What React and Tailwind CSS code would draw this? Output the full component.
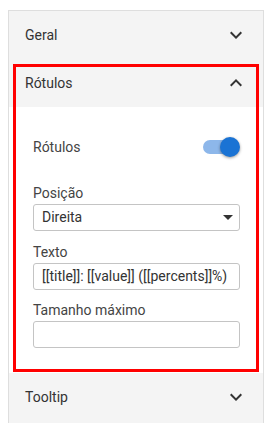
import React from "react";

const ExpandMore = () => (
  <svg width="24" height="24" viewBox="0 0 24 24" fill="#333">
    <path d="M16.59 8.59L12 13.17 7.41 8.59 6 10l6 6 6-6z" />
  </svg>
);

const ExpandLess = () => (
  <svg width="24" height="24" viewBox="0 0 24 24" fill="#333">
    <path d="M12 8l-6 6 1.41 1.41L12 10.83l4.59 4.58L18 14z" />
  </svg>
);

const SectionHeader = ({ title, open }) => (
  <div className="h-12 flex items-center justify-between pl-4 pr-[15px] bg-[#f4f4f4] text-[14px] text-[#333]">
    <span>{title}</span>
    {open ? <ExpandLess /> : <ExpandMore />}
  </div>
);

const Field = ({ label, children, className = "" }) => (
  <div className={className}>
    <div className="h-5 leading-5 text-[14px] text-[#444]">{label}</div>
    {children}
  </div>
);

const App = () => {
  return (
    <div
      className="relative w-[267px] h-[423px] overflow-hidden bg-white pt-[10px] pl-[8px]"
      style={{ fontFamily: "Roboto, 'Noto Sans', sans-serif" }}
    >
      <div className="w-[256px] h-[420px] border border-[#dedede] bg-[#f4f4f4]">
        <SectionHeader title="Geral" />

        {/* Rótulos section */}
        <div>
          <SectionHeader title="Rótulos" open />
          <div className="bg-white pl-[24px] pr-[23px] pt-[30px] pb-[25px]">
            <div className="h-5 flex items-center justify-between">
              <span className="text-[14px] text-[#444]">Rótulos</span>
              <div className="relative w-[37px] h-5">
                <div className="absolute left-0 top-[3px] w-[34px] h-[14px] rounded-full bg-[#8db7ea]" />
                <div className="absolute right-0 top-0 w-5 h-5 rounded-full bg-[#1a73d4] shadow-[0_1px_3px_rgba(0,0,0,0.4)]" />
              </div>
            </div>

            <Field label="Posição" className="mt-[26px]">
              <div className="mt-px h-[27px] flex items-center justify-between border border-[#c4c4c4] rounded-[3px] pl-2 text-[14px] text-[#333]">
                <span>Direita</span>
                <svg width="10" height="5" viewBox="0 0 10 5" className="mr-[6px]">
                  <path d="M0 0l5 5 5-5z" fill="#333" />
                </svg>
              </div>
            </Field>

            <Field label="Texto" className="mt-[11px]">
              <div className="mt-px h-[27px] flex items-center border border-[#c4c4c4] rounded-[3px] pl-2 text-[14px] text-[#333] whitespace-nowrap overflow-hidden">
                [[title]]: [[value]] ([[percents]]%)
              </div>
            </Field>

            <Field label="Tamanho máximo" className="mt-[10px]">
              <div className="mt-px h-[27px] border border-[#c4c4c4] rounded-[3px]" />
            </Field>
          </div>
        </div>

        <SectionHeader title="Tooltip" />
      </div>

      {/* red highlight annotation */}
      <div className="pointer-events-none absolute left-[13px] top-[64px] w-[246px] h-[308px] border-[3px] border-[#ff0000]" />
    </div>
  );
};

export default App;
